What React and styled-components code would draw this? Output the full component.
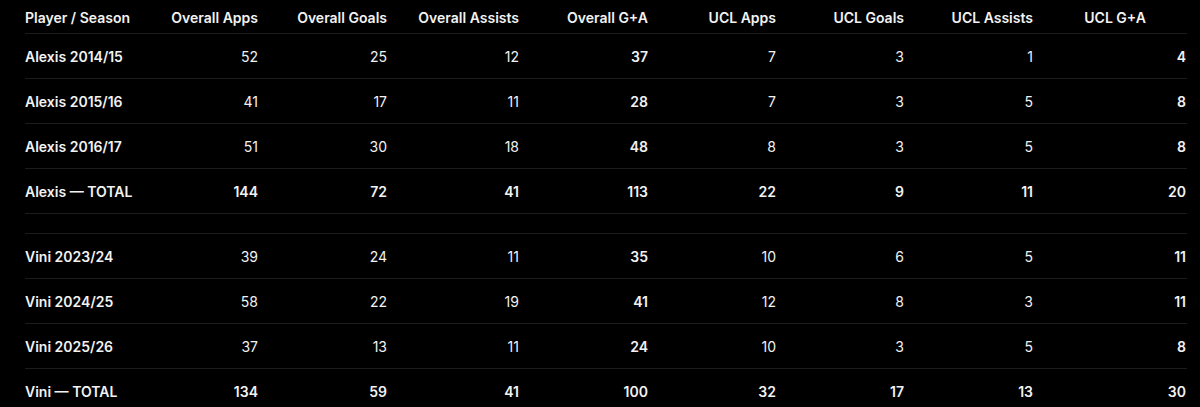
import React from "react";
import styled, { createGlobalStyle } from "styled-components";

const Global = createGlobalStyle`
  html, body { margin: 0; padding: 0; background: #000; }
  body { font-family: Inter, "Noto Sans", "Liberation Sans", sans-serif; color: #f2f2f2; }
`;

const Table = styled.div`
  padding: 0 13px 0 25px;
  background: #000;
`;

const Row = styled.div`
  display: grid;
  grid-template-columns: 104px 129px 129px 132px 129px 128px 128px 129px 153px;
  align-items: center;
  height: ${(p) => p.$h}px;
  border-bottom: 1px solid #1c1c1c;
  box-sizing: border-box;
`;

const HeadCell = styled.div`
  font-size: 14px;
  font-weight: 600;
  color: #f2f2f2;
  white-space: nowrap;
  text-align: ${(p) => (p.$left ? "left" : "right")};
  padding-right: ${(p) => p.$pr || 0}px;
  padding-top: 2px;
`;

const Cell = styled.div`
  font-size: 14px;
  font-weight: ${(p) => (p.$bold ? 600 : 400)};
  color: #f2f2f2;
  white-space: nowrap;
  text-align: ${(p) => (p.$left ? "left" : "right")};
`;

const headers = [
  "Overall Apps",
  "Overall Goals",
  "Overall Assists",
  "Overall G+A",
  "UCL Apps",
  "UCL Goals",
  "UCL Assists",
  "UCL G+A",
];

const rows = [
  { name: "Alexis 2014/15", v: [52, 25, 12, 37, 7, 3, 1, 4] },
  { name: "Alexis 2015/16", v: [41, 17, 11, 28, 7, 3, 5, 8] },
  { name: "Alexis 2016/17", v: [51, 30, 18, 48, 8, 3, 5, 8] },
  { name: "Alexis — TOTAL", v: [144, 72, 41, 113, 22, 9, 11, 20], total: true },
  { blank: true },
  { name: "Vini 2023/24", v: [39, 24, 11, 35, 10, 6, 5, 11] },
  { name: "Vini 2024/25", v: [58, 22, 19, 41, 12, 8, 3, 11] },
  { name: "Vini 2025/26", v: [37, 13, 11, 24, 10, 3, 5, 8] },
  { name: "Vini — TOTAL", v: [134, 59, 41, 100, 32, 17, 13, 30], total: true },
];

const boldCols = new Set([3, 7]);

export default function App() {
  return (
    <>
      <Global />
      <Table>
        <Row $h={34}>
          <HeadCell $left>Player / Season</HeadCell>
          {headers.map((h, i) => (
            <HeadCell key={h} $pr={i === 7 ? 40 : 0}>
              {h}
            </HeadCell>
          ))}
        </Row>
        {rows.map((r, idx) =>
          r.blank ? (
            <Row key={idx} $h={20} />
          ) : (
            <Row key={idx} $h={45}>
              <Cell $left $bold>
                {r.name}
              </Cell>
              {r.v.map((n, i) => (
                <Cell key={i} $bold={r.total || boldCols.has(i)}>
                  {n}
                </Cell>
              ))}
            </Row>
          )
        )}
      </Table>
    </>
  );
}
